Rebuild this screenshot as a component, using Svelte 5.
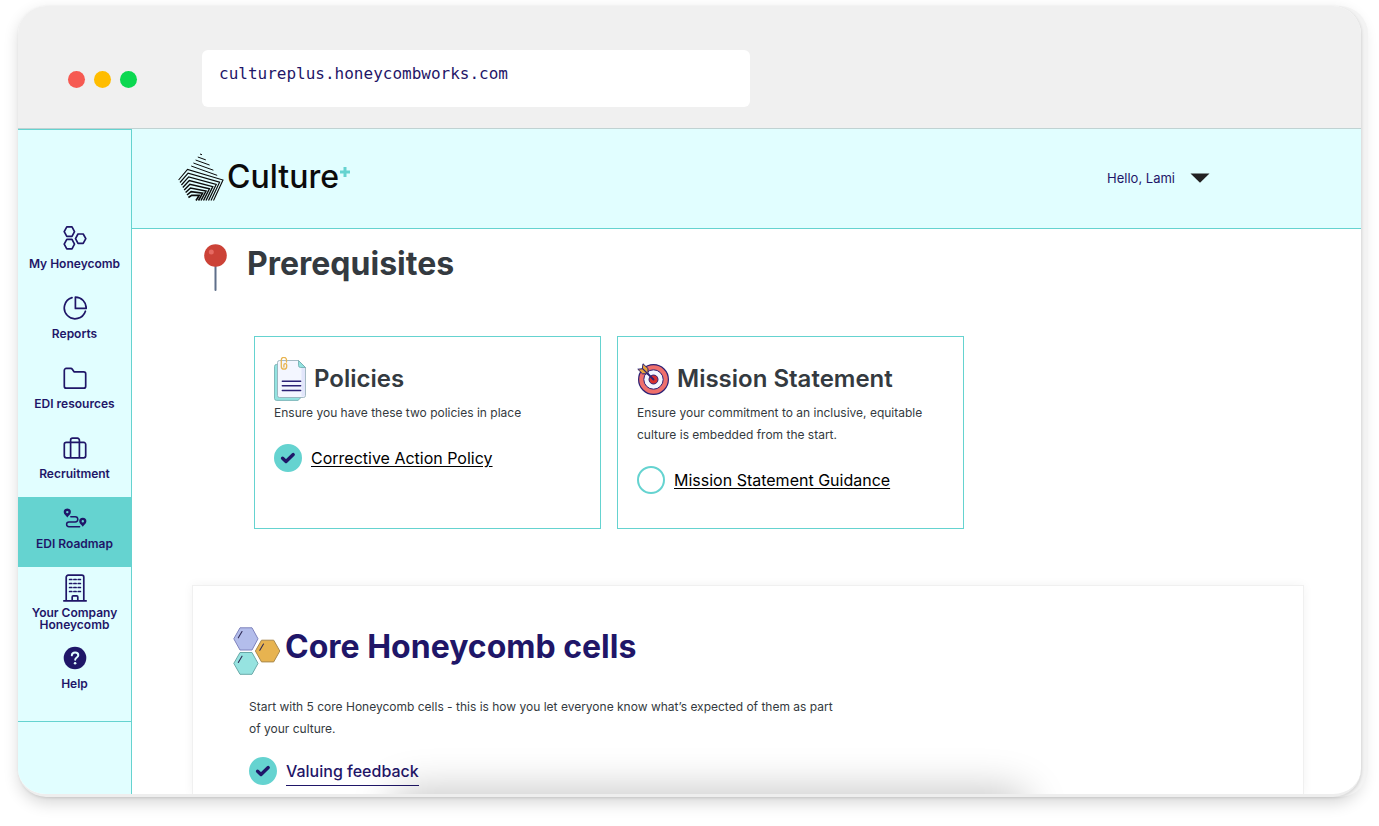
<script>
  let address = $state('cultureplus.honeycombworks.com');

  const nav = [
    { label: 'My Honeycomb', icon: 'cells' },
    { label: 'Reports', icon: 'pie' },
    { label: 'EDI resources', icon: 'folder' },
    { label: 'Recruitment', icon: 'case' },
    { label: 'EDI Roadmap', icon: 'route', active: true },
    { label: 'Your Company Honeycomb', icon: 'building', tall: true },
    { label: 'Help', icon: 'help' }
  ];

  let cards = $state([
    {
      title: 'Policies',
      icon: 'papers',
      text: 'Ensure you have these two policies in place',
      link: 'Corrective Action Policy',
      done: true
    },
    {
      title: 'Mission Statement',
      icon: 'target',
      text: 'Ensure your commitment to an inclusive, equitable culture is embedded from the start.',
      link: 'Mission Statement Guidance',
      done: false
    }
  ]);

  let core = $state([{ link: 'Valuing feedback', done: true }]);

  // Logo mark: short parallel strokes above nested chevrons.
  const strokes = [0, 1, 2, 3, 4].map((i) => {
    const x = 22 - i * 2.2;
    const y = 1 + i * 3;
    const w = 2 + i * 6;
    return `M${x} ${y}l${w} ${w * 0.36}`;
  });
  const chevrons = [0, 1, 2, 3, 4, 5, 6, 7].map(
    (i) =>
      `M${0.6 + i * 1.4} ${27 + i * 2.5}L${9.5 + i * 0.6} ${16.5 + i * 3.7}L${45 - i * 3.4} ${27 + i * 2.2}L${35.5 - i * 2.5} 47.5`
  );
</script>

{#snippet tick(item)}
  <label class="tick">
    <input type="checkbox" bind:checked={item.done} aria-label={item.link} />
    {#if item.done}
      <svg width="16" height="12" viewBox="0 0 16 12" aria-hidden="true">
        <path d="M2.6 6.2 6 9.4 13.2 2.6" fill="none" stroke="#1f1668" stroke-width="3.4" stroke-linecap="round" stroke-linejoin="round" />
      </svg>
    {/if}
  </label>
{/snippet}

<div class="window">
  <div class="chrome">
    <div class="dots"><i class="red"></i><i class="amber"></i><i class="green"></i></div>
    <input class="address" type="text" aria-label="Address" spellcheck="false" bind:value={address} />
  </div>

  <div class="app">
    <nav class="side">
      <div class="links">
        {#each nav as item}
          <a href="#{item.icon}" class:active={item.active} class:tall={item.tall}>
            {#if item.icon === 'cells'}
              <svg width="24" height="24" viewBox="0 0 24 24" class="line">
                <path d="M3.800.9h5.200l2.500 4.700L9 10.300H3.800L1.200 5.600zM3.800 13.300h5.200l2.500 4.800L9 22.900H3.800L1.200 18.100zM15 8h5.200l2.600 4.700-2.600 4.700H15l-2.500-4.700z" />
              </svg>
            {:else if item.icon === 'pie'}
              <svg width="24" height="24" viewBox="0 0 24 24" class="line">
                <path d="M9 1.6A10.8 10.8 0 1 0 22.4 15.2M12.4 1.1v11.3h10.8A10.9 10.9 0 0 0 12.4 1.1z" />
              </svg>
            {:else if item.icon === 'folder'}
              <svg width="24" height="24" viewBox="0 0 24 24" class="line">
                <path d="M1.3 4.4a2 2 0 0 1 2-2h4.4a2 2 0 0 1 1.6.9l1.7 2.5h9.7a2 2 0 0 1 2 2v12.4a2 2 0 0 1-2 2H3.3a2 2 0 0 1-2-2z" />
              </svg>
            {:else if item.icon === 'case'}
              <svg width="24" height="24" viewBox="0 0 24 24" class="line">
                <path d="M3.3 6.4h17.4a2 2 0 0 1 2 2v11.4a2 2 0 0 1-2 2H3.3a2 2 0 0 1-2-2V8.400a2 2 0 0 1 2-2zM7.600 21.800V4.200a2 2 0 0 1 2-2h4.800a2 2 0 0 1 2 2v17.600" />
              </svg>
            {:else if item.icon === 'route'}
              <svg width="24" height="24" viewBox="0 0 24 24">
                <path fill="#1f1668" fill-rule="evenodd" d="M4.300 2.500A3.600 3.600 0 0 1 7.900 6.100C7.900 8.500 5.200 10.200 4.300 11.500 3.400 10.200.7 8.500.7 6.100A3.600 3.600 0 0 1 4.300 2.500zm0 2.400a1.200 1.200 0 1 0 0 2.400 1.200 1.200 0 0 0 0-2.400zM19.800 11.700a3.600 3.600 0 0 1 3.600 3.600c0 2.400-2.700 4.100-3.600 5.400-.9-1.300-3.600-3-3.600-5.400a3.600 3.600 0 0 1 3.600-3.600zm0 2.400a1.200 1.200 0 1 0 0 2.400 1.200 1.200 0 0 0 0-2.400z" />
                <path fill="none" stroke="#1f1668" stroke-width="1.500" stroke-linecap="round" d="M7.800 10.700h4.400a2.600 2.600 0 0 1 0 5.200H6a2.400 2.400 0 0 0 0 4.800h10.600" />
              </svg>
            {:else if item.icon === 'building'}
              <svg width="24" height="28" viewBox="0 0 24 28" class="line">
                <path d="M.8 26.900h22.400M3.200 26.900V3.200a2 2 0 0 1 2-2h13.600a2 2 0 0 1 2 2v23.700M9.200 26.900v-4a1 1 0 0 1 1-1h3.600a1 1 0 0 1 1 1v4" />
                <path d="M6.600 5.500h2.200M10.900 5.500h2.200M15.200 5.500h2.200M6.600 9.500h2.200M10.900 9.500h2.200M15.200 9.500h2.200M6.600 13.500h2.200M10.900 13.500h2.200M15.200 13.500h2.200M6.600 17.500h2.200M10.900 17.500h2.200M15.200 17.500h2.200" />
              </svg>
            {:else}
              <svg width="24" height="24" viewBox="0 0 24 24">
                <circle cx="12" cy="12" r="11.300" fill="#1f1668" />
                <path d="M8.800 9.300c.2-1.700 1.500-2.700 3.300-2.700 1.900 0 3.200 1.100 3.200 2.600 0 2.300-3.100 2.300-3.100 4.600" fill="none" stroke="#e1feff" stroke-width="2" stroke-linecap="round" />
                <circle cx="12.100" cy="17.300" r="1.300" fill="#e1feff" />
              </svg>
            {/if}
            <span>{item.label}</span>
          </a>
        {/each}
      </div>
    </nav>

    <div class="page">
      <header>
        <a class="brand" href="#home">
          <svg width="46" height="48" viewBox="0 0 46 48" aria-hidden="true" fill="none" stroke="#0b0b0b">
            <g stroke-width="1">{#each strokes as d}<path {d} />{/each}</g>
            {#each chevrons as d, i}<path {d} stroke-width={1.1 + i * 0.08} />{/each}
          </svg>
          <span class="word">Culture</span>
          <svg class="plus" width="12" height="12" viewBox="0 0 12 12" aria-label="plus"><path d="M6 1v10M1 6h10" stroke="#65d3d0" stroke-width="3" /></svg>
        </a>
        <button class="user" type="button">
          <span>Hello, Lami</span>
          <svg width="20" height="10" viewBox="0 0 20 10" aria-hidden="true"><path d="M.5.500h19L10 9.800z" fill="#222" /></svg>
        </button>
      </header>

      <main>
        <section class="pre">
          <div class="heading">
            <svg width="24" height="48" viewBox="0 0 24 48" aria-hidden="true">
              <path d="M11.500 22v24" stroke="#5f6f8a" stroke-width="2" stroke-linecap="round" />
              <circle cx="11.500" cy="11.500" r="11.300" fill="#cc4237" />
              <circle cx="7.300" cy="8" r="2.500" fill="#e66a62" />
            </svg>
            <h1>Prerequisites</h1>
          </div>

          <div class="cards">
            {#each cards as card}
              <article>
                <div class="title">
                  {#if card.icon === 'papers'}
                    <svg width="32" height="44" viewBox="0 0 32 44" aria-hidden="true">
                      <path d="M2.500 7.500H24l3 3v30l-3 2.900H2.500a2 2 0 0 1-2-2v-32a2 2 0 0 1 2-2z" fill="#93e3e0" stroke="#6fa9ad" stroke-width=".8" />
                      <path d="M5.500 3.500h19l7 7v28a2 2 0 0 1-2 2h-24a2 2 0 0 1-2-2v-33a2 2 0 0 1 2-2z" fill="#f3f6ff" stroke="#8fa9b5" stroke-width=".8" />
                      <path d="M27.500 10v29.500h2a1.500 1.500 0 0 0 1.500-1.500V10z" fill="#e2e6fb" />
                      <path d="M24.500 3.500v5a2 2 0 0 0 2 2h5z" fill="#93e3e0" stroke="#6fa9ad" stroke-width=".8" />
                      <path d="M8.300 24.300h18.400M8.300 28.800h18.400M8.300 33.500h18.400" stroke="#2b2175" stroke-width="1.400" stroke-linecap="round" />
                      <path d="M12.500 5V3a2.600 2.600 0 0 0-5.200 0v6.500a2.700 2.700 0 0 0 5.400 0V8a1.400 1.400 0 0 0-2.800 0v2" fill="none" stroke="#e8b450" stroke-width="1.300" stroke-linecap="round" />
                    </svg>
                  {:else}
                    <svg width="32" height="32" viewBox="0 0 32 32" aria-hidden="true">
                      <g stroke="#2b2175">
                        <circle cx="16.500" cy="16.500" r="14.900" fill="#ef6f6c" stroke-width="1.200" />
                        <circle cx="16.500" cy="16.500" r="9.700" fill="#f3f6ff" stroke-width="1" />
                        <circle cx="16.500" cy="16.500" r="4.500" fill="#d62f2f" stroke-width="1" />
                        <path d="M8 8l8.500 8.500" stroke-width="1.800" stroke-linecap="round" />
                        <path d="M6 .8 11 5.500v5.300H5.500L.8 6.200l4.500-.4z" fill="#e8a33a" stroke-width="1" stroke-linejoin="round" />
                        <path d="M5.300 5.300 11 11" stroke-width="1.200" />
                      </g>
                    </svg>
                  {/if}
                  <h2>{card.title}</h2>
                </div>
                <p>{card.text}</p>
                <div class="row">
                  {@render tick(card)}
                  <a href="#policy">{card.link}</a>
                </div>
              </article>
            {/each}
          </div>
        </section>

        <section class="core">
          <div class="core-title">
            <svg width="48" height="48" viewBox="0 0 48 48" aria-hidden="true" stroke-width="1">
              <path d="M7 .8h12l6 11-6 11.200H7L.8 11.800z" fill="#b3bdeb" stroke="#7f83bd" />
              <path d="M7 25.500h12l6 10.900-6 10.900H7L.8 36.400z" fill="#96e3e0" stroke="#6aa9a8" />
              <path d="M28.500 13.200h12.200l6.100 10.800-6.100 10.900H28.500L22.400 24z" fill="#e7b350" stroke="#a8894e" />
              <path d="M9 4.500 5.300 10.800M9 29.200 5.300 35.500M30.500 17 26.800 23.300" stroke="#2f2a55" stroke-width="1.100" stroke-linecap="round" />
            </svg>
            <h1>Core Honeycomb cells</h1>
          </div>
          <div class="core-body">
            <p>Start with 5 core Honeycomb cells - this is how you let everyone know what’s expected of them as part of your culture.</p>
            {#each core as item}
              <div class="row">
                {@render tick(item)}
                <a class="cell" href="#feedback">{item.link}</a>
              </div>
            {/each}
          </div>
        </section>
      </main>
    </div>
    <div class="fade" aria-hidden="true"></div>
  </div>
</div>

<style>
  :global(body) {
    margin: 0;
    background: #fff;
  }
  .window {
    --navy: #1f1668;
    --teal: #65d3d0;
    --pale: #e1feff;
    --slate: #343a40;
    box-sizing: border-box;
    margin: 6px 18px 29px;
    border-bottom: 3px solid #eee;
    border-radius: 28px;
    overflow: hidden;
    background: #fff;
    box-shadow:
      1px 1px 3px rgba(0, 0, 0, 0.12),
      7px 0 0 #f3f3f3,
      1px 6px 16px rgba(0, 0, 0, 0.16);
    font-family: Inter, sans-serif;
    color: var(--slate);
  }
  .chrome {
    display: flex;
    align-items: flex-start;
    gap: 65px;
    height: 122px;
    padding-left: 50px;
    background: #f0f0f0;
    border-bottom: 1px solid #c0d2d2;
  }
  .dots {
    display: flex;
    gap: 9px;
    padding-top: 65px;
  }
  .dots i {
    width: 17px;
    height: 17px;
    border-radius: 50%;
  }
  .red { background: #f65a52; }
  .amber { background: #ffbd00; }
  .green { background: #0bd850; }
  .address {
    box-sizing: border-box;
    flex: 0 1 548px;
    min-width: 0;
    height: 57px;
    margin-top: 44px;
    padding: 0 17px 10px;
    border: 0;
    border-radius: 6px;
    background: #fff;
    color: var(--navy);
    font: 16px 'DejaVu Sans Mono', monospace;
  }
  .app {
    position: relative;
    display: flex;
    overflow: hidden;
  }
  .side {
    flex: 0 0 113px;
    background: var(--pale);
    border-right: 1px solid var(--teal);
  }
  .links {
    display: flex;
    flex-direction: column;
    padding: 87px 0 14px;
    border-top: 1px solid var(--teal);
    border-bottom: 1px solid var(--teal);
  }
  .links a {
    display: flex;
    flex-direction: column;
    align-items: center;
    gap: 5px;
    box-sizing: border-box;
    min-height: 70px;
    padding: 9px 8px 0;
    color: var(--navy);
    font-size: 12px;
    font-weight: 600;
    line-height: 18px;
    text-align: center;
    text-decoration: none;
  }
  .links a.active {
    background: var(--teal);
  }
  .links a.tall {
    padding-top: 7px;
    line-height: 12px;
  }
  .line {
    fill: none;
    stroke: var(--navy);
    stroke-width: 1.7;
    stroke-linejoin: round;
    stroke-linecap: round;
  }
  .page {
    flex: 1;
    min-width: 0;
  }
  header {
    display: flex;
    align-items: center;
    justify-content: space-between;
    height: 96px;
    padding: 0 151px 3px 46px;
    background: var(--pale);
    border-bottom: 1px solid var(--teal);
  }
  .brand {
    display: flex;
    align-items: center;
    color: #0b0b0b;
    text-decoration: none;
  }
  .word {
    margin-left: 3px;
    font-size: 32px;
    font-weight: 500;
    line-height: 40px;
  }
  .plus {
    align-self: flex-start;
    margin-top: 13px;
  }
  .user {
    display: flex;
    align-items: center;
    gap: 15px;
    padding: 2px 0 0;
    border: 0;
    background: none;
    color: var(--navy);
    font: 13px/20px Inter, sans-serif;
  }
  h1,
  h2,
  p {
    margin: 0;
  }
  h1 {
    font-size: 32px;
    font-weight: 700;
    line-height: 40px;
  }
  h2 {
    font-size: 24px;
    font-weight: 600;
    line-height: 32px;
  }
  p {
    padding-top: 1px;
    font-size: 12px;
    line-height: 22px;
  }
  .heading {
    display: flex;
    gap: 19px;
    padding: 15px 0 0 72px;
  }
  .cards {
    display: grid;
    grid-template-columns: repeat(2, minmax(0, 347px));
    gap: 16px;
    padding: 44px 57px 0 122px;
  }
  article {
    padding: 20px 19px 34px;
    border: 1px solid var(--teal);
  }
  .title {
    display: flex;
    align-items: center;
    gap: 8px;
    height: 44px;
  }
  .row {
    display: flex;
    align-items: center;
    gap: 9px;
    margin-top: 20px;
  }
  .row a {
    color: #000;
    font-size: 16px;
    line-height: 22px;
    text-underline-offset: 2px;
  }
  .tick {
    display: grid;
    place-items: center;
  }
  .tick input,
  .tick svg {
    grid-area: 1 / 1;
  }
  .tick input {
    appearance: none;
    box-sizing: border-box;
    width: 28px;
    height: 28px;
    margin: 0;
    border: 2px solid var(--teal);
    border-radius: 50%;
  }
  .tick input:checked {
    background: var(--teal);
  }
  .tick svg {
    pointer-events: none;
  }
  .core {
    margin: 56px 57px 0 60px;
    padding: 41px 40px 8px;
    border: 1px solid #f0f0f0;
    border-bottom: 0;
    box-shadow: 0 0 10px rgba(0, 0, 0, 0.05);
  }
  .core-title {
    display: flex;
    align-items: flex-start;
    gap: 4px;
    color: var(--navy);
  }
  .core-body {
    max-width: 584px;
    padding: 20px 0 0 16px;
  }
  .core-body .row {
    margin-top: 16px;
  }
  .row .cell {
    padding: 4px 0 3px;
    border-bottom: 1px solid var(--navy);
    color: var(--navy);
    font-weight: 500;
    text-decoration: none;
  }
  /* Soft shade rising from the bottom edge */
  .fade {
    position: absolute;
    left: 28%;
    right: 25%;
    top: 100%;
    height: 40px;
    border-radius: 20px;
    pointer-events: none;
    box-shadow: 0 0 40px 5px rgba(0, 0, 0, 0.22);
  }
</style>
